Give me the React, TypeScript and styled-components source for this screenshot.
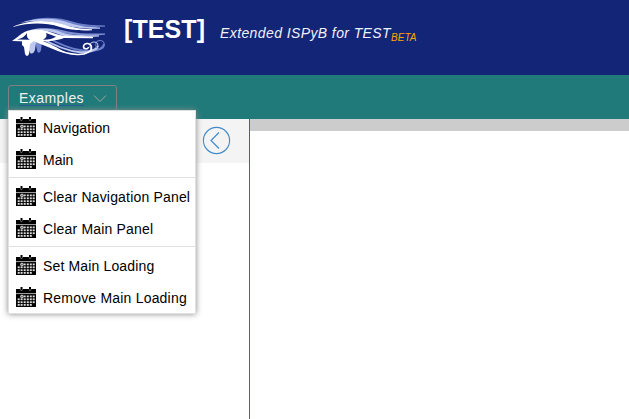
import React from "react";
import styled, { createGlobalStyle } from "styled-components";

const GlobalStyle = createGlobalStyle`
  * { box-sizing: border-box; }
  html, body { margin: 0; height: 100%; overflow: hidden; background: #fff; }
  body { font-family: "Liberation Sans", Arial, sans-serif; }
`;
const Page = styled.div`
  height: 419px;
  display: flex;
  flex-direction: column;
`;
const Header = styled.header`
  height: 75px;
  flex: none;
  display: flex;
  align-items: flex-start;
  padding: 14px 0 0 8px;
  background: #132577;
  color: #fff;
  white-space: nowrap;
`;
const Logo = styled.svg`
  width: 100px;
  height: 46px;
  flex: none;
`;
const Title = styled.h1`
  margin: 0 0 0 16px;
  width: 96px;
  font-size: 25px;
  line-height: 31px;
  font-weight: 700;
  letter-spacing: 0.1px;
`;
const Tagline = styled.div`
  margin-top: 9px;
  font-size: 14px;
  line-height: 20px;
  font-style: italic;
  letter-spacing: 0.4px;
  color: #f0f1fa;
`;
const Beta = styled.sub`
  font-size: 10px;
  line-height: 0;
  letter-spacing: 0;
  vertical-align: -3px;
  color: #ffa500;
`;
const Toolbar = styled.nav`
  height: 44px;
  flex: none;
  padding: 10px 8px 0;
  background: #207a7a;
`;
const Dropdown = styled.div`
  position: relative;
  width: 109px;
`;
const MenuButton = styled.button`
  display: flex;
  align-items: center;
  width: 109px;
  height: 26px;
  padding: 0 10px;
  border: 1px solid #808080;
  border-radius: 3px;
  background: transparent;
  color: #f0f0f0;
  font: 14px/14px "Liberation Sans", Arial, sans-serif;
  letter-spacing: 0.45px;
`;
const ButtonLabel = styled.span`
  width: 65px;
  text-align: left;
  border-bottom: 1px solid #24568d;
`;
const Chevron = styled.svg`
  width: 14px;
  height: 9px;
  margin-left: 9px;
  flex: none;
`;
const Menu = styled.div`
  position: absolute;
  z-index: 2;
  top: 25px;
  left: 0;
  width: 188px;
  height: 204px;
  padding: 1px 0;
  border: 1px solid #e1e1e1;
  background: #fff;
  box-shadow: 0 0 6px #888;
`;
const MenuItem = styled.div`
  display: flex;
  align-items: center;
  height: 32px;
  padding-left: 7px;
  font-size: 14px;
  color: #000;
  white-space: nowrap;
`;
const Label = styled.span<{ $spacing: number }>`
  margin-left: 7px;
  letter-spacing: ${(p) => p.$spacing}px;
`;
const Separator = styled.div`
  height: 1px;
  margin: 1px 0 3px;
  background: #e0e0e0;
`;
const Calendar = styled.svg`
  width: 20px;
  height: 20px;
  margin-bottom: 2px;
  flex: none;
`;
const Body = styled.div`
  flex: 1;
  display: flex;
`;
const Sidebar = styled.aside`
  width: 250px;
  border-right: 1px solid #207a7a;
`;
const SidebarHeader = styled.div`
  height: 44px;
  padding: 7px 18px 0 0;
  display: flex;
  justify-content: flex-end;
  background: #f4f4f4;
`;
const BackIcon = styled.svg`
  width: 29px;
  height: 29px;
`;
const Main = styled.main`
  flex: 1;
`;
const MainStrip = styled.div`
  height: 12px;
  background: #ccc;
`;

const EyeLogo = () => (
  <Logo viewBox="8 14 100 46" fill="none">
    <path d="M28 21C40 16 60 17 74 22C84 25 94 25 105 25.5V26.8C92 27 80 27 70 25C56 21 42 18 28 21Z" fill="#6a7ec8" />
    <path d="M20 23C38 17 56 18 70 23C80 26.5 88 27 100 27.5V28.7C86 29 76 28 66 25.5C49 20 34 20 20 23Z" fill="#bcc8f0" />
    <path d="M13 26.6C27 20.5 46 19 62 24C74 28 80 29 92 29.2V30.2C78 31 69 29.5 60 27C43 22 29 23 14 26.8Z" fill="#fff" />
    <path d="M36 29C49 27 58 29 68 31.5C80 34 91 33.5 105 33.5V34.7C88 36 76 35 66 33.5C56 31.5 48 30 36 29Z" fill="#7f91d2" />
    <path d="M30 30C43 27 53 29 62 32.5C73 36 86 35 99 35.2V36.5C83 38 72 37 62 35.5C52 32 43 29 30 30Z" fill="#bcc8f0" />
    <path d="M45 36C55 42 68 49 83 50.5C94 51.5 103 50 104 44" stroke="#6a7ec8" strokeWidth="1.8" />
    <path d="M39 37C53 45 67 51 80 52.2Q94 53 98 46" stroke="#bcc8f0" strokeWidth="2" />
    <circle cx="100" cy="44.8" r="4.3" stroke="#6a7ec8" strokeWidth="1.1" />
    <circle cx="94" cy="46" r="4" stroke="#bcc8f0" strokeWidth="1.1" />
    <path d="M34 42H42L41 50Q40 54 37.5 52L36 46Z" fill="#7588cf" />
    <path d="M29 42H36L35 50Q33 55 30 53L28 47Z" fill="#bcc8f0" />
    <path d="M12 41C20 36 23 30 35 29.5C47 29 53 34 62 35.5L93 37V38.2L64 38C52 42 43 42 12 41Z" fill="#fff" />
    <path d="M17 39.5Q24 38 27 33Q26 38 30 39.7Z" fill="#132577" />
    <path d="M46 33Q52 35 56 36.7Q51 40 43 39.7Q48 37 46 33Z" fill="#132577" />
    <path d="M22 41H34L30 44 29 54Q27 58 25 54L24 47 22 45Z" fill="#fff" />
    <path d="M33 40.5C49 45 60 54 77 54.5C87 55 92 51 91.5 47C91 43 85 42 83.5 46C83 49 88 50 88.5 47" stroke="#fff" strokeWidth="1.5" />
    <path d="M33 40C47 45 56 51 67 53.2C56 47 49 43 40 40Z" fill="#fff" />
  </Logo>
);

const CalendarIcon = () => (
  <Calendar viewBox="0 0 20 20">
    <path d="M0 2H4.5V0H6.5V2H13V0H15V2H20V6.3H0ZM0 7H20V20H0Z" />
    <path d="M0 6.7H20" stroke="#777" strokeWidth=".6" />
    <path d="M4 2.5Q5.3 4.5 6.8 2.5M12.7 2.5Q14 4.5 15.4 2.5" stroke="#bbb" strokeWidth=".7" fill="none" />
    {[8.5, 11.4, 14.3, 17].map((y, row) =>
      [1.7, 4.6, 7.7, 10.8, 13.8, 16.7].map((x, col) =>
        (row === 0 && col === 0) || (row === 3 && col === 5) ? null : (
          <rect key={`${x}-${y}`} x={x} y={y} width="2" height="1.8" fill="#ddd" />
        ),
      ),
    )}
    <circle cx="6" cy="9.5" r="1.4" stroke="#fff" strokeWidth=".6" fill="#777" />
  </Calendar>
);

const groups = [
  [{ text: "Navigation", spacing: 0.1 }, { text: "Main", spacing: 0 }],
  [{ text: "Clear Navigation Panel", spacing: 0.18 }, { text: "Clear Main Panel", spacing: 0.18 }],
  [{ text: "Set Main Loading", spacing: 0.15 }, { text: "Remove Main Loading", spacing: 0.2 }],
];

export default function App() {
  return (
    <Page>
      <GlobalStyle />
      <Header>
        <EyeLogo />
        <Title>[TEST]</Title>
        <Tagline>Extended ISPyB for TEST<Beta>BETA</Beta></Tagline>
      </Header>
      <Toolbar>
        <Dropdown>
          <MenuButton>
            <ButtonLabel>Examples</ButtonLabel>
            <Chevron viewBox="0 0 14 9"><path d="M1 1.5L7 7.5L13 1.5" fill="none" stroke="#a5a5a5" /></Chevron>
          </MenuButton>
          <Menu>
            {groups.map((items, i) => (
              <React.Fragment key={i}>
                {i > 0 && <Separator />}
                {items.map((item) => (
                  <MenuItem key={item.text}>
                    <CalendarIcon />
                    <Label $spacing={item.spacing}>{item.text}</Label>
                  </MenuItem>
                ))}
              </React.Fragment>
            ))}
          </Menu>
        </Dropdown>
      </Toolbar>
      <Body>
        <Sidebar>
          <SidebarHeader>
            <BackIcon viewBox="0 0 29 29" fill="none" stroke="#428bca">
              <circle cx="14.5" cy="14.5" r="13.1" strokeWidth="1.1" />
              <path d="M17 6.5L9 14.5L17 22.5" strokeWidth="1.2" />
            </BackIcon>
          </SidebarHeader>
        </Sidebar>
        <Main><MainStrip /></Main>
      </Body>
    </Page>
  );
}
